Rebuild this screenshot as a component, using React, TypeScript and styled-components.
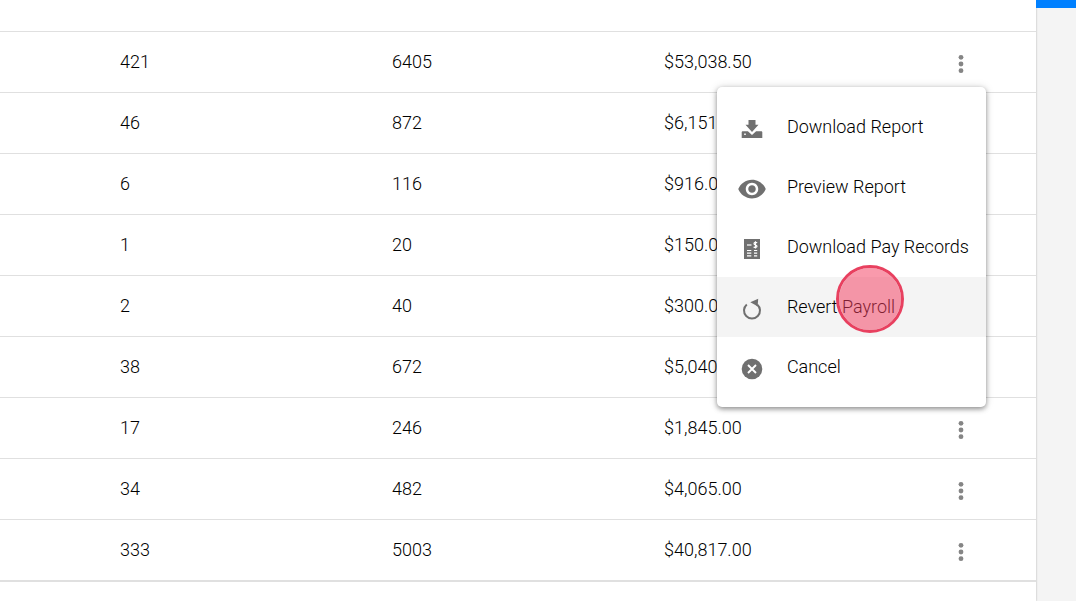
import React from "react";
import styled, { createGlobalStyle } from "styled-components";

const GlobalStyle = createGlobalStyle`
  *, *::before, *::after { box-sizing: border-box; }
  body {
    margin: 0;
    background: #f4f4f4;
    color: #000;
    font-family: Roboto, "Liberation Sans", sans-serif;
    font-size: 18px;
    font-weight: 300;
    line-height: 24px;
  }
`;

const Page = styled.div`
  display: grid;
  grid-template-columns: minmax(0, 1fr) 40px;
  min-height: 100vh;
`;

const Card = styled.main`
  position: relative;
  background: #fff;
  box-shadow: 0 0 2px rgba(0, 0, 0, 0.3);
`;

const SideRail = styled.aside`
  border-top: 8px solid #0080ff;
  position: relative;
`;

const Table = styled.table`
  width: 100%;
  table-layout: fixed;
  border-collapse: separate;
  border-spacing: 0;
  border-bottom: 2px solid #e0e0e0;
`;

const GutterCol = styled.col`
  width: 96px;
`;

const ActionCol = styled.col`
  width: 124px;
`;

const HeadCell = styled.th`
  height: 31px;
  padding: 0;
`;

const Cell = styled.td`
  height: 61px;
  padding: 0 24px;
  border-top: 1px solid #e0e0e0;
  text-align: left;
`;

const MoreButton = styled.button`
  display: flex;
  align-items: center;
  justify-content: center;
  width: 50px;
  height: 48px;
  margin: 4px 0 0;
  padding: 0;
  border: 0;
  background: none;
  color: #858585;
  cursor: pointer;
`;

const Menu = styled.div`
  position: absolute;
  top: 87px;
  right: 50px;
  padding: 10px 0;
  border-radius: 5px;
  background: #fff;
  box-shadow: 0 2px 5px rgba(0, 0, 0, 0.4), 0 0 10px rgba(0, 0, 0, 0.12);
`;

const MenuItem = styled.button<{ $active?: boolean }>`
  display: flex;
  align-items: center;
  gap: 20px;
  width: 100%;
  height: 60px;
  padding: 0 17px 0 20px;
  border: 0;
  background: ${({ $active }) => ($active ? "#f4f4f4" : "transparent")};
  color: inherit;
  font: inherit;
  text-align: left;
  white-space: nowrap;
  cursor: pointer;
`;

const MenuIcon = styled.svg`
  flex: none;
  width: 30px;
  height: 30px;
  margin-top: 4px;
  fill: #707070;
`;

const ClickMarker = styled.div`
  position: absolute;
  top: 265px;
  right: 132px;
  width: 68px;
  height: 68px;
  border: 3px solid #e8405f;
  border-radius: 50%;
  background: rgba(243, 62, 96, 0.52);
  background-clip: padding-box;
  pointer-events: none;
`;

const DownloadIcon = () => (
  <MenuIcon viewBox="0 0 30 30" aria-hidden="true">
    <path d="M11.500 6h7v4.700H21.500L15 18 8.500 10.700h3z" />
    <path
      fillRule="evenodd"
      d="M5.300 17.300h5.600L15 21l4.100-3.700h5.600l.6.600V24H4.700v-6.100zM7.200 19.500v1.600h1.600v-1.600z"
    />
  </MenuIcon>
);

const PreviewIcon = () => (
  <MenuIcon viewBox="0 0 24 24" aria-hidden="true">
    <path d="M12 4.500C7 4.500 2.730 7.610 1 12c1.730 4.390 6 7.500 11 7.500s9.270-3.110 11-7.500c-1.730-4.390-6-7.500-11-7.500zM12 17c-2.760 0-5-2.240-5-5s2.240-5 5-5 5 2.240 5 5-2.240 5-5 5zm0-8c-1.660 0-3 1.340-3 3s1.340 3 3 3 3-1.340 3-3-1.340-3-3-3z" />
  </MenuIcon>
);

const RecordsIcon = () => (
  <MenuIcon viewBox="0 0 30 30" aria-hidden="true">
    <path d="M7 5h16v20H7z" />
    <g fill="none" stroke="#fff">
      <path d="M10 11h4.500" strokeWidth="1.200" />
      <path
        d="M20 9c-.3-.8-3-1-3 .7 0 1.500 3 1 3 2.600 0 1.600-2.800 1.500-3.200.4M18.500 7.200v7.300"
        strokeWidth="1.200"
      />
      <path
        d="M10 16.500h4.300M10 19.200h4.300M10 21.900h4.300M17 16.500h3.200M17 19.200h3.200M17 21.900h3.200"
        strokeWidth="1.200"
      />
    </g>
  </MenuIcon>
);

const RevertIcon = () => (
  <MenuIcon viewBox="0 0 30 30" aria-hidden="true">
    <path
      d="M9.800 10.400A8 8 0 1 0 20.200 10.400"
      fill="none"
      stroke="#707070"
      strokeWidth="2"
    />
    <path d="M13.300 8.200L21.200 4.800l-.6 8-2.300-1.800z" />
  </MenuIcon>
);

const CancelIcon = () => (
  <MenuIcon viewBox="0 0 30 30" aria-hidden="true">
    <circle cx="15" cy="15" r="10.300" />
    <path
      d="M11 11l8 8M19 11l-8 8"
      fill="none"
      stroke="#fff"
      strokeWidth="1.900"
    />
  </MenuIcon>
);

const rows = [
  { employees: "421", hours: "6405", total: "$53,038.50" },
  { employees: "46", hours: "872", total: "$6,151.00" },
  { employees: "6", hours: "116", total: "$916.00" },
  { employees: "1", hours: "20", total: "$150.00" },
  { employees: "2", hours: "40", total: "$300.00" },
  { employees: "38", hours: "672", total: "$5,040.00" },
  { employees: "17", hours: "246", total: "$1,845.00" },
  { employees: "34", hours: "482", total: "$4,065.00" },
  { employees: "333", hours: "5003", total: "$40,817.00" },
];

const actions = [
  { label: "Download Report", Icon: DownloadIcon },
  { label: "Preview Report", Icon: PreviewIcon },
  { label: "Download Pay Records", Icon: RecordsIcon },
  { label: "Revert Payroll", Icon: RevertIcon, active: true },
  { label: "Cancel", Icon: CancelIcon },
];

export default function App() {
  return (
    <Page>
      <GlobalStyle />
      <Card>
        <Table>
          <colgroup>
            <GutterCol />
            <col />
            <col />
            <col />
            <ActionCol />
          </colgroup>
          <thead>
            <tr>
              <HeadCell colSpan={5} />
            </tr>
          </thead>
          <tbody>
            {rows.map((row) => (
              <tr key={row.total}>
                <Cell />
                <Cell>{row.employees}</Cell>
                <Cell>{row.hours}</Cell>
                <Cell>{row.total}</Cell>
                <Cell>
                  <MoreButton type="button" aria-label="Row actions">
                    <svg width="6" height="20" viewBox="0 0 6 20" fill="currentColor">
                      <circle cx="3" cy="3.300" r="2.400" />
                      <circle cx="3" cy="10" r="2.400" />
                      <circle cx="3" cy="16.700" r="2.400" />
                    </svg>
                  </MoreButton>
                </Cell>
              </tr>
            ))}
          </tbody>
        </Table>
        <Menu role="menu">
          {actions.map(({ label, Icon, active }) => (
            <MenuItem key={label} type="button" role="menuitem" $active={active}>
              <Icon />
              {label}
            </MenuItem>
          ))}
        </Menu>
        <ClickMarker />
      </Card>
      <SideRail />
    </Page>
  );
}
